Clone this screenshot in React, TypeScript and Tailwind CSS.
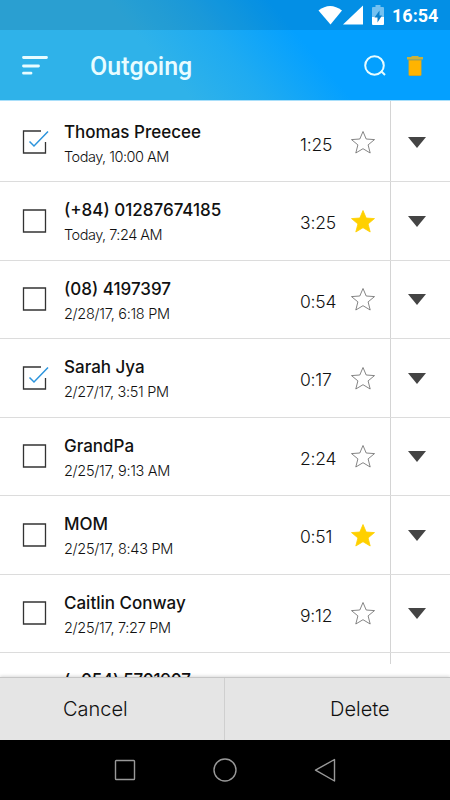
import React from "react";
import clsx from "clsx";

interface ICall {
    name: string;
    date: string;
    duration: string;
    checked?: boolean;
    starred?: boolean;
    dateClass?: string;
}

const calls: ICall[] = [
    { name: "Thomas Preecee", date: "Today, 10:00 AM", duration: "1:25", checked: true, dateClass: "tracking-[-0.5px]" },
    { name: "(+84) 01287674185", date: "Today, 7:24 AM", duration: "3:25", starred: true, dateClass: "tracking-[-0.5px]" },
    { name: "(08) 4197397", date: "2/28/17, 6:18 PM", duration: "0:54" },
    { name: "Sarah Jya", date: "2/27/17, 3:51 PM", duration: "0:17", checked: true },
    { name: "GrandPa", date: "2/25/17, 9:13 AM", duration: "2:24" },
    { name: "MOM", date: "2/25/17, 8:43 PM", duration: "0:51", starred: true },
    { name: "Caitlin Conway", date: "2/25/17, 7:27 PM", duration: "9:12" },
]

const StatusBar = () => (
    <div className="flex h-[30px] items-center bg-black/10 pl-[318px] text-white">
        <svg width="24" height="20" viewBox="0 0 24 20" fill="currentColor">
            <path d="M.500 5.500 Q12-3.500 24 5.500 L12.500 19.500Z" />
        </svg>
        <svg className="ml-[1px]" width="20" height="20" viewBox="0 0 20 20" fill="currentColor">
            <path d="M20 .5V19.500H0Z" />
        </svg>
        <svg className="ml-[9px]" width="12" height="20" viewBox="0 0 12 20">
            <path d="M3.500 0h5v2H11a1 1 0 0 1 1 1v9H0V3a1 1 0 0 1 1-1h2.500z" fill="#fff" opacity=".45" />
            <path d="M0 12h12v7a1 1 0 0 1-1 1H1a1 1 0 0 1-1-1z" fill="#fff" />
            <path d="M7.500 5.500 2.500 12.500H5.500V17.500L10 10.500H7.500z" fill="#0a80cc" />
        </svg>
        <span className="ml-[8px] pt-[2px] text-[18px] font-bold leading-none">16:54</span>
    </div>
)

const Header = () => (
    <div className="h-[100px] bg-[linear-gradient(50deg,#2fb2e9_36%,#1fabf1_50%,#04a0ff_66%)] font-[Roboto,sans-serif]">
        <StatusBar />
        <div className="flex h-[70px] items-center pl-[22px] text-[#e8fcff]">
            <svg width="26" height="20" viewBox="0 0 26 20" stroke="currentColor" strokeWidth="2.800" strokeLinecap="round">
                <path d="M1.500 2.500H24.500M1.500 11H16.500M1.500 18.200H9" />
            </svg>
            <h1 className="ml-[42px] w-[230px] pt-[2px] text-[25px] font-medium leading-none">Outgoing</h1>
            <svg className="ml-[44px] mt-[2px]" width="23" height="22" viewBox="0 0 23 22" fill="none" stroke="currentColor" strokeWidth="2">
                <circle cx="10.500" cy="10.500" r="9.300" />
                <path d="M17 16 21 20" />
            </svg>
            <svg className="ml-[20px] mt-[2px]" width="16" height="20" viewBox="0 0 16 20">
                <path d="M4.500 0h7v1H16v2.500H0V1h4.500z" fill="#c9b23c" />
                <path d="M1.500 3.500h13v15a1.500 1.500 0 0 1-1.500 1.500H3a1.500 1.500 0 0 1-1.500-1.500z" fill="#c9a52c" />
                <path d="M2.200 4.800h11.600V19H2.200z" fill="#ffb400" />
            </svg>
        </div>
    </div>
)

const Checkbox = ({ checked }: { checked?: boolean }) => (
    <svg className="ml-[22px] shrink-0" width="28" height="26" viewBox="0 0 28 26" fill="none" strokeWidth="1.300">
        {
            checked ?
                <>
                    <path d="M19 2H1.500V24H23.500V13" stroke="#333" />
                    <path d="M7.500 12.500 12 17 26 2.500" stroke="#2c94dc" strokeWidth="1.500" />
                </>
                :
                <path d="M1.500 2H23.500V24H1.500Z" stroke="#333" />
        }
    </svg>
)

const Star = ({ filled }: { filled?: boolean }) => (
    <svg width="26" height="24" viewBox="0 0 26 24" fill={filled ? "#ffd000" : "none"} stroke={filled ? "#ffd000" : "#666"} strokeWidth=".8">
        <path d="M13 1.500 16.200 9 24.500 9.600 18.100 14.900 20.200 23 13 18.700 5.800 23 7.900 14.900 1.500 9.600 9.800 9Z" />
    </svg>
)

const CallRow = ({ call }: { call: ICall }) => (
    <div className="flex h-[78.500px] shrink-0 border-b border-[#dcdcdc]">
        <div className="flex flex-1 items-center">
            <Checkbox checked={call.checked} />
            <div className="ml-[14px] w-[236px] whitespace-nowrap pt-[4px]">
                <p className="text-[17px] font-medium leading-[24px]">{call.name}</p>
                <p className={clsx("text-[14.5px] font-[350] leading-[25px]", call.dateClass || "tracking-[-0.3px]")}>{call.date}</p>
            </div>
            <p className="w-[50px] pt-[5px] text-[17.5px] font-[350] tracking-[-0.2px]">{call.duration}</p>
            <Star filled={call.starred} />
        </div>
        <div className="flex w-[60px] items-center border-l border-[#d4d4d4] pl-[17px] pt-[1px]">
            <svg width="18" height="11" viewBox="0 0 18 11" fill="#444">
                <path d="M0 0H18L9 11Z" />
            </svg>
        </div>
    </div>
)

const NavBar = () => (
    <div className="flex h-[60px] items-center bg-black pl-[114px]">
        <svg width="222" height="26" viewBox="0 0 222 26" fill="none" stroke="#999" strokeWidth="1.400">
            <rect x="1.500" y="3.500" width="19" height="19" rx=".8" />
            <circle cx="111" cy="13" r="11" />
            <path d="M220.500 2.500V24L201.500 13.200Z" strokeLinejoin="round" />
        </svg>
    </div>
)

const App = () => {
    return (
        <div className="flex h-[800px] w-[450px] flex-col overflow-hidden bg-white font-[Inter,sans-serif] text-[#111]">
            <Header />
            <div className="flex h-[577px] flex-col overflow-hidden border-t border-[#a9dffa]">
                <div className="flex h-[2.500px] shrink-0 justify-end">
                    <div className="w-[60px] border-l border-[#d4d4d4]" />
                </div>
                { calls.map((call) => <CallRow key={call.name} call={call} />) }
                <div className="flex h-[24px] shrink-0 justify-between pl-[64px]">
                    <p className="pt-[15px] text-[17px] font-medium leading-[24px] tracking-[-0.25px]">(+054) 5701907</p>
                    <div className="h-[11px] w-[60px] border-l border-[#d4d4d4]" />
                </div>
            </div>
            <div className="z-10 flex h-[63px] border-t border-[#c6c6c6] bg-[#e5e5e5] text-[20px] font-[350] shadow-[0_-1px_3px_rgba(0,0,0,0.15)]">
                <button className="w-[225px] border-r border-[#cfcfcf] pl-[63px] text-left">Cancel</button>
                <button className="pl-[105px] text-left">Delete</button>
            </div>
            <NavBar />
        </div>
    )
}

export default App
